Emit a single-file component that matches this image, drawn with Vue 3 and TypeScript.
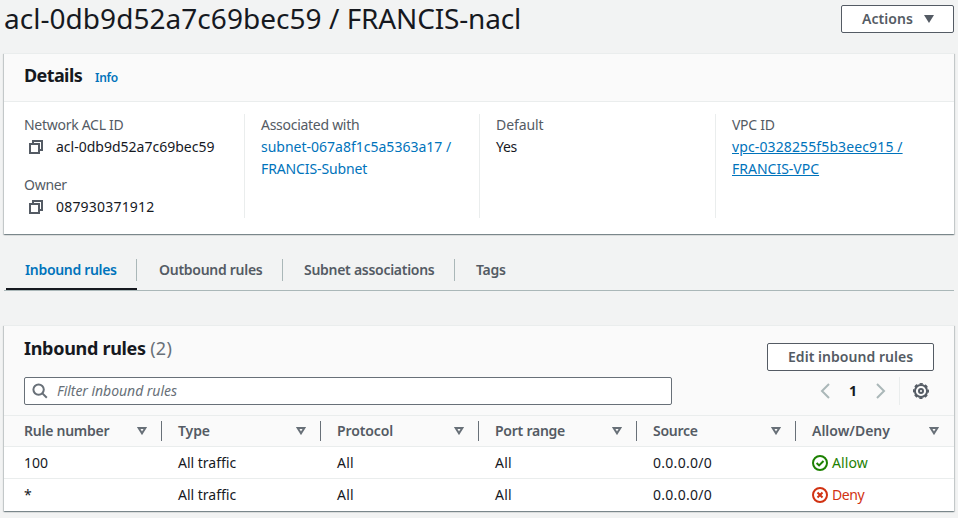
<script setup lang="ts">
interface Tab { label: string; cls: string }
interface Column { label: string; cls: string }
interface Rule { num: string; type: string; protocol: string; ports: string; source: string; allow: boolean }

const tabs: Tab[] = [
  { label: 'Inbound rules', cls: 'active' },
  { label: 'Outbound rules', cls: 'outbound' },
  { label: 'Subnet associations', cls: 'subnets' },
  { label: 'Tags', cls: 'last' },
]
const columns: Column[] = [
  { label: 'Rule number', cls: 'tight' },
  { label: 'Type', cls: '' },
  { label: 'Protocol', cls: '' },
  { label: 'Port range', cls: 'tight' },
  { label: 'Source', cls: 'tight' },
  { label: 'Allow/Deny', cls: 'wide' },
]
const rules: Rule[] = [
  { num: '100', type: 'All traffic', protocol: 'All', ports: 'All', source: '0.0.0.0/0', allow: true },
  { num: '*', type: 'All traffic', protocol: 'All', ports: 'All', source: '0.0.0.0/0', allow: false },
]
</script>

<template>
  <main class="page">
    <header class="top">
      <h1>acl-0db9d52a7c69bec59 / <span class="name">FRANCIS-nacl</span></h1>
      <button class="btn actions">
        <span>Actions</span>
        <svg class="caret" viewBox="0 0 10 8"><path d="M0 0h10L5 8z" fill="currentColor" /></svg>
      </button>
    </header>

    <section class="card details">
      <div class="details-head"><h2>Details</h2><a class="info">Info</a></div>
      <div class="grid">
        <div class="col">
          <div class="label">Network ACL ID</div>
          <div class="value copy">
            <svg class="copy-icon" viewBox="0 0 16 16"><path d="M2 5h9v9H2zM5 5V2h9v9h-3" /></svg>
            <span>acl-0db9d52a7c69bec59</span>
          </div>
          <div class="label second">Owner</div>
          <div class="value copy owner">
            <svg class="copy-icon" viewBox="0 0 16 16"><path d="M2 5h9v9H2zM5 5V2h9v9h-3" /></svg>
            <span>087930371912</span>
          </div>
        </div>
        <div class="col">
          <div class="label">Associated with</div>
          <a class="link">subnet-067a8f1c5a5363a17 /<br /><span class="snug">FRANCIS-Subnet</span></a>
        </div>
        <div class="col">
          <div class="label default">Default</div>
          <div class="value yes">Yes</div>
        </div>
        <div class="col">
          <div class="label">VPC ID</div>
          <a class="link under"><span class="loose">vpc-0328255f5b3eec915 /</span><br />FRANCIS-VPC</a>
        </div>
      </div>
    </section>

    <nav class="tabs">
      <a v-for="t in tabs" :key="t.label" class="tab" :class="t.cls"><span>{{ t.label }}</span></a>
    </nav>

    <section class="card rules">
      <div class="rules-head">
        <h2>Inbound rules <span class="count">(2)</span></h2>
        <button class="btn edit">Edit inbound rules</button>
      </div>
      <div class="tools">
        <div class="search">
          <svg class="glass" viewBox="0 0 16 16"><circle cx="6.6" cy="6.6" r="5.2" /><path d="M10.4 10.4l4.4 4.4" /></svg>
          <span>Filter inbound rules</span>
        </div>
        <div class="pager">
          <svg class="chev" viewBox="0 0 10 16"><path d="M9 1L2 8l7 7" /></svg>
          <b>1</b>
          <svg class="chev" viewBox="0 0 10 16"><path d="M1 1l7 7-7 7" /></svg>
        </div>
        <div class="prefs">
          <svg class="gear" viewBox="0 0 16 16">
            <circle cx="8" cy="8" r="6.100" />
            <circle class="teeth" cx="8" cy="8" r="7.300" />
            <circle cx="8" cy="8" r="2" />
          </svg>
        </div>
      </div>
      <div class="row head">
        <div v-for="c in columns" :key="c.label" class="cell" :class="c.cls">
          <span>{{ c.label }}</span>
          <svg class="sort" viewBox="0 0 10 8"><path d="M1.600 1h6.800L5 6.300z" /></svg>
        </div>
      </div>
      <div v-for="r in rules" :key="r.num" class="row">
        <div class="cell">{{ r.num }}</div>
        <div class="cell">{{ r.type }}</div>
        <div class="cell all">{{ r.protocol }}</div>
        <div class="cell all">{{ r.ports }}</div>
        <div class="cell ip">{{ r.source }}</div>
        <div class="cell status" :class="r.allow ? 'allow' : 'deny'">
          <svg viewBox="0 0 16 16">
            <circle cx="8" cy="8" r="7" />
            <path v-if="r.allow" d="M4.600 8l2.500 2.400 4.400-4.400" />
            <path v-else d="M5.500 5.500l5 5M10.500 5.500l-5 5" />
          </svg>
          <span>{{ r.allow ? 'Allow' : 'Deny' }}</span>
        </div>
      </div>
    </section>
  </main>
</template>

<style>
body { background: #f2f3f3; overflow: hidden; }
</style>
<style scoped>
* { box-sizing: border-box; }
.page { height: 518px; padding: 0 4px; font: 14px/22px 'Noto Sans', 'Open Sans', sans-serif; color: #16191f; }
h1, h2 { margin: 0; }
svg { flex: none; fill: none; stroke: currentColor; }
.top { display: flex; justify-content: space-between; height: 53px; }
h1 { font-size: 28px; line-height: 36px; font-weight: 400; letter-spacing: 0.04px; }
.name { letter-spacing: -0.17px; }
.btn { font: 600 14px/20px 'Noto Sans', 'Open Sans', sans-serif; color: #545b64; background: #fff; border: 1px solid #545b64; border-radius: 2px; height: 28px; padding: 0 20px; display: flex; align-items: center; letter-spacing: 0.04px; white-space: nowrap; }
.actions { width: 113px; margin-top: 5px; justify-content: space-between; padding-right: 19px; }
.caret { width: 10px; height: 8px; stroke: none; }
.card { background: #fff; border-top: 1px solid #eaeded; box-shadow: 0 1px 1px 0 rgba(0, 28, 36, .3), 1px 1px 1px 0 rgba(0, 28, 36, .15), -1px 1px 1px 0 rgba(0, 28, 36, .15); }
.details { height: 181px; }
.details-head { height: 48px; padding: 0 20px; background: #fafafa; border-bottom: 1px solid #eaeded; display: flex; align-items: baseline; line-height: 42px; }
h2 { font-size: 18px; font-weight: 700; letter-spacing: -0.3px; }
.details h2 { letter-spacing: -0.6px; }
.info { font-size: 12px; font-weight: 600; letter-spacing: -0.3px; color: #0073bb; margin-left: 13px; }
.grid { display: grid; grid-template-columns: 241px 235px 236px 1fr; padding-top: 12px; height: 116px; }
.col { padding-left: 16px; border-right: 1px solid #eaeded; }
.col:first-child { padding-left: 20px; }
.col:last-child { border: 0; }
.label { color: #545b64; letter-spacing: -0.28px; }
.label.default { letter-spacing: -0.09px; }
.second { margin-top: 16px; }
.copy { display: flex; align-items: center; gap: 12px; padding-left: 4px; }
.owner { letter-spacing: 0.2px; }
.yes { letter-spacing: -0.28px; }
.copy-icon { width: 16px; height: 16px; stroke: #545b64; stroke-width: 2; }
.link { color: #0073bb; display: block; }
.snug { letter-spacing: -0.12px; }
.loose { letter-spacing: 0.12px; }
.under { text-decoration: underline; text-underline-offset: 1px; }
.tabs { display: flex; align-items: flex-end; margin-top: 16px; height: 41px; border-bottom: 1px solid #aab7b8; font-weight: 600; color: #545b64; letter-spacing: -0.28px; }
.tab { height: 31px; border-bottom: 2px solid transparent; }
.tab span { display: block; border-right: 1px solid #aab7b8; }
.active { width: 131px; color: #0073bb; margin-left: 2px; border-color: #16191f; letter-spacing: -0.32px; }
.active span { padding-left: 19px; }
.outbound { width: 146px; padding-left: 22px; }
.subnets { width: 172px; padding-left: 21px; }
.last { padding-left: 21px; }
.last span { border: 0; }
.rules { margin-top: 34px; height: 186px; }
.rules-head { height: 51px; padding: 0 20px; background: #fafafa; display: flex; justify-content: space-between; align-items: flex-start; line-height: 44px; }
.count { font-weight: 400; color: #687078; letter-spacing: 0.3px; }
.edit { margin-top: 17px; width: 167px; }
.tools { display: flex; height: 38px; padding: 0 20px; background: #fafafa; }
.search { width: 648px; height: 28px; background: #fff; border: 1px solid #687078; border-radius: 2px; display: flex; align-items: center; padding-left: 7px; gap: 9px; color: #687078; font-style: italic; letter-spacing: -0.04px; }
.glass { width: 16px; height: 16px; stroke-width: 2; }
.pager { display: flex; align-items: center; justify-content: space-between; height: 28px; width: 66px; margin-left: 148px; }
.pager b { font-weight: 700; }
.chev { width: 10px; height: 16px; stroke: #aab7b8; stroke-width: 2; }
.prefs { margin-left: 13px; height: 28px; border-left: 1px solid #eaeded; padding-left: 13px; display: flex; align-items: center; color: #545b64; }
.gear { width: 16px; height: 16px; stroke-width: 2; }
.teeth { stroke-width: 1.4; stroke-dasharray: 3.3 2.433; stroke-dashoffset: 1.65; }
.row { display: grid; grid-template-columns: 158px 159px 158px 158px 159px 158px; height: 32px; border-top: 1px solid #eaeded; }
.cell { display: flex; align-items: center; padding-left: 16px; }
.cell:first-child { padding-left: 20px; }
.head { height: 31px; background: #fafafa; color: #545b64; font-weight: 600; letter-spacing: -0.1px; }
.head .cell { justify-content: space-between; padding-right: 14px; border-right: 1px solid #687078; height: 20px; margin-top: 5px; }
.head .cell:last-child { border: 0; padding-right: 15px; }
.head .tight { letter-spacing: -0.25px; }
.head .wide { letter-spacing: 0; }
.sort { width: 10px; height: 8px; stroke: #687078; stroke-width: 2; }
.all, .ip { letter-spacing: 0.28px; }
.status { gap: 4px; }
.status svg { width: 16px; height: 16px; stroke-width: 2; }
.allow { color: #1d8102; letter-spacing: 0.1px; }
.deny { color: #d13212; letter-spacing: -0.45px; }
</style>
